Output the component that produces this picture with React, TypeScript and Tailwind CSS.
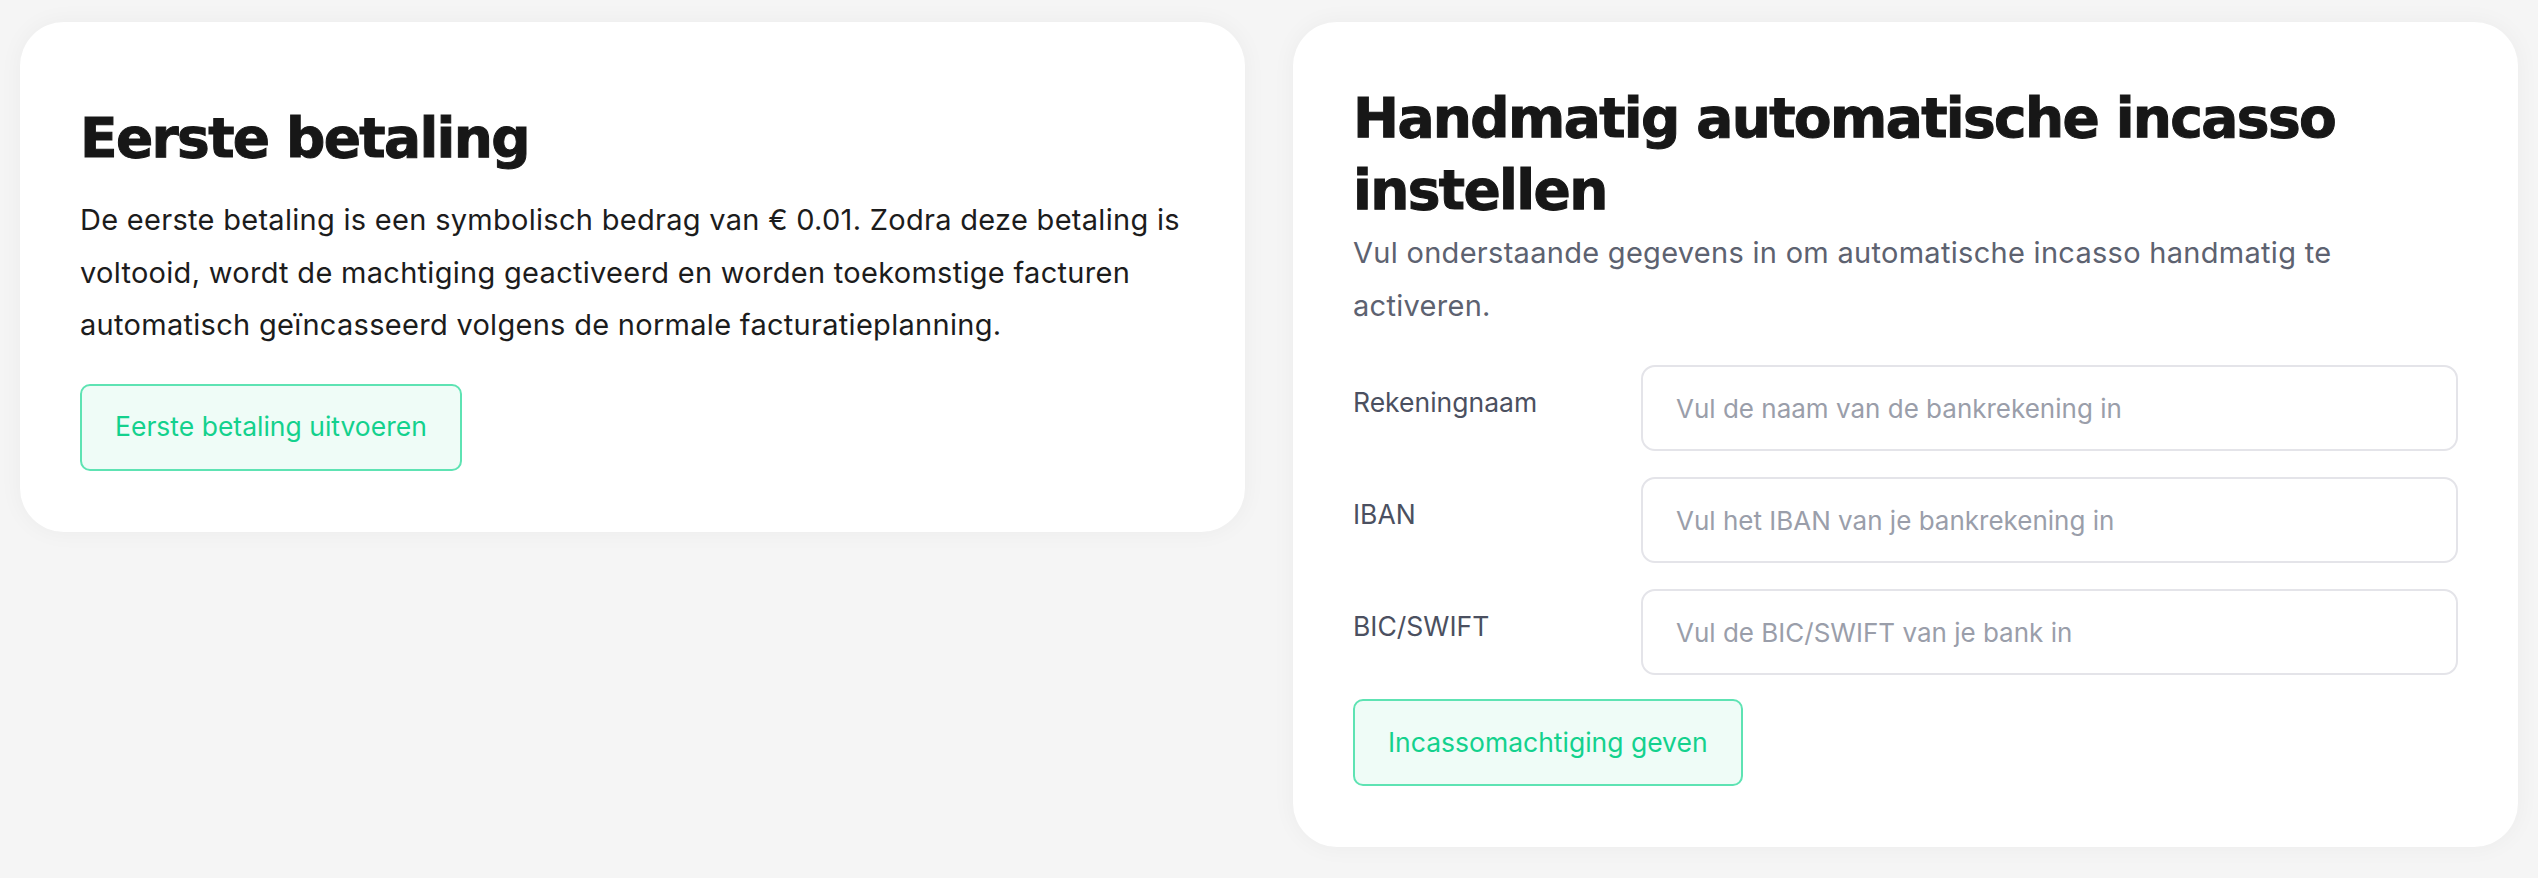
import React from 'react';

const headingFont = { fontFamily: '"DejaVu Sans", "Liberation Sans", sans-serif' };

function PrimaryButton({ children }: { children: React.ReactNode }) {
  return (
    <button
      type="button"
      className="h-[87px] rounded-[10px] border-2 border-[#5ee3b3] bg-[#effcf7] px-[33px] text-[26.5px] text-[#13d18d] font-['Inter',sans-serif]"
    >
      {children}
    </button>
  );
}

function Field({ label, placeholder }: { label: string; placeholder: string }) {
  return (
    <div className="grid grid-cols-[288px_1fr]">
      <label className="pt-[17px] text-[26.5px] leading-[40px] text-[#4b5060]">{label}</label>
      <input
        type="text"
        placeholder={placeholder}
        className="h-[86px] w-full rounded-[14px] border-2 border-[#e4e4e9] bg-white px-[33px] text-[26px] text-[#1c1c1c] outline-none placeholder:text-[#9a9eaa]"
      />
    </div>
  );
}

export default function App() {
  return (
    <div className="min-h-screen bg-[#f5f5f5] px-5 pt-[22px] font-['Inter',sans-serif]">
      <div className="grid grid-cols-2 items-start gap-12">
        {/* Eerste betaling */}
        <div className="rounded-[44px] bg-white px-[60px] pt-[80px] pb-[61px] shadow-[0_0_24px_rgba(0,0,0,0.045)]">
          <h2
            className="mb-5 text-[55px] font-bold leading-[72px] tracking-[-0.03em] text-[#171717] [-webkit-text-stroke:1px_#171717]"
            style={headingFont}
          >
            Eerste betaling
          </h2>
          <p className="text-[29px] leading-[52.5px] tracking-[0.01em] text-[#1c1c1c]">
            De eerste betaling is een symbolisch bedrag van € 0.01. Zodra deze betaling is voltooid, wordt de
            machtiging geactiveerd en worden toekomstige facturen automatisch geïncasseerd volgens de normale
            facturatieplanning.
          </p>
          <div className="mt-[32px]">
            <PrimaryButton>Eerste betaling uitvoeren</PrimaryButton>
          </div>
        </div>

        {/* Handmatige incasso */}
        <div className="rounded-[44px] bg-white px-[60px] pt-[60px] pb-[61px] shadow-[0_0_24px_rgba(0,0,0,0.045)]">
          <h2
            className="text-[55px] font-bold leading-[72px] tracking-[-0.03em] text-[#171717] [-webkit-text-stroke:1px_#171717]"
            style={headingFont}
          >
            Handmatig automatische incasso instellen
          </h2>
          <p className="text-[29px] leading-[53px] tracking-[0.01em] text-[#5d6270]">
            Vul onderstaande gegevens in om automatische incasso handmatig te activeren.
          </p>
          <form className="mt-[33px] flex flex-col gap-[26px]">
            <Field label="Rekeningnaam" placeholder="Vul de naam van de bankrekening in" />
            <Field label="IBAN" placeholder="Vul het IBAN van je bankrekening in" />
            <Field label="BIC/SWIFT" placeholder="Vul de BIC/SWIFT van je bank in" />
          </form>
          <div className="mt-[24px]">
            <PrimaryButton>Incassomachtiging geven</PrimaryButton>
          </div>
        </div>
      </div>
    </div>
  );
}
